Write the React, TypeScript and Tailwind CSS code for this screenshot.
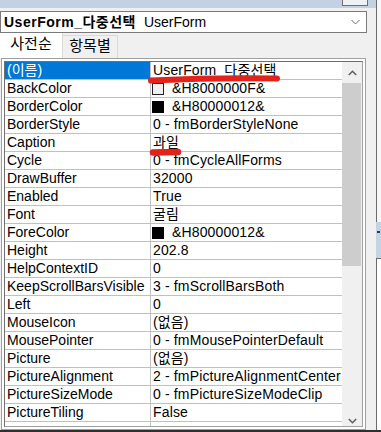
import React from 'react'

type Prop = { name: string; value: string; swatch?: 'light' | 'dark' }

const props: Prop[] = [
  { name: '(이름)', value: 'UserForm_다중선택' },
  { name: 'BackColor', value: '&H8000000F&', swatch: 'light' },
  { name: 'BorderColor', value: '&H80000012&', swatch: 'dark' },
  { name: 'BorderStyle', value: '0 - fmBorderStyleNone' },
  { name: 'Caption', value: '과일' },
  { name: 'Cycle', value: '0 - fmCycleAllForms' },
  { name: 'DrawBuffer', value: '32000' },
  { name: 'Enabled', value: 'True' },
  { name: 'Font', value: '굴림' },
  { name: 'ForeColor', value: '&H80000012&', swatch: 'dark' },
  { name: 'Height', value: '202.8' },
  { name: 'HelpContextID', value: '0' },
  { name: 'KeepScrollBarsVisible', value: '3 - fmScrollBarsBoth' },
  { name: 'Left', value: '0' },
  { name: 'MouseIcon', value: '(없음)' },
  { name: 'MousePointer', value: '0 - fmMousePointerDefault' },
  { name: 'Picture', value: '(없음)' },
  { name: 'PictureAlignment', value: '2 - fmPictureAlignmentCenter' },
  { name: 'PictureSizeMode', value: '0 - fmPictureSizeModeClip' },
  { name: 'PictureTiling', value: 'False' },
  { name: '', value: '' },
]

function Chevron({ up }: { up?: boolean }) {
  return (
    <svg width="9" height="6" viewBox="0 0 9 6">
      <polyline
        points={up ? '0.8,5 4.5,1.3 8.2,5' : '0.8,1 4.5,4.7 8.2,1'}
        fill="none"
        stroke="#606060"
        strokeWidth="1.6"
      />
    </svg>
  )
}

function Row({ p, selected }: { p: Prop; selected: boolean }) {
  return (
    <div className="flex h-[18px] shrink-0 border-b border-[#c0c0c0]">
      <div
        className={
          selected
            ? 'w-[146px] shrink-0 overflow-hidden whitespace-nowrap border-r border-[#c0c0c0] bg-[#0078d7] pl-[2px] leading-[17px] text-white'
            : 'w-[146px] shrink-0 overflow-hidden whitespace-nowrap border-r border-[#c0c0c0] pl-[2px] leading-[17px] text-black'
        }
      >
        {p.name}
      </div>
      <div className="flex flex-1 items-center overflow-hidden whitespace-nowrap pl-[2px] leading-[17px] text-black tracking-[0.15px]">
        {p.swatch === 'light' && (
          <span className="-ml-[1px] mr-[8px] h-[12px] w-[12px] shrink-0 border border-[#222] bg-[#f0f0f0]" />
        )}
        {p.swatch === 'dark' && (
          <span className="-ml-[1px] mr-[8px] h-[12px] w-[12px] shrink-0 bg-black" />
        )}
        {p.value}
      </div>
    </div>
  )
}

export default function App() {
  return (
    <div className="relative flex h-[432px] w-[381px] flex-col overflow-hidden bg-[#f4f4f4] font-['Liberation_Sans','Noto_Sans_CJK_KR',sans-serif] text-[14px]">
      <div className="flex min-h-0 flex-1">
        {/* properties window */}
        <div className="flex w-[376px] flex-col bg-[#f0f0f0]">
          {/* title bar edge */}
          <div className="flex h-[8px] justify-end bg-[#c3d2e2] pr-[8px]">
            <div className="h-[6px] w-[26px] border-x border-b border-[#707070] bg-[#eef1f5]" />
          </div>

          {/* object combo */}
          <div className="mt-[3px] flex h-[22px] w-[367px] items-center border border-[#7a7a7a] bg-white pl-[3px] pr-[6px]">
            <span className="font-bold tracking-[0.5px]">UserForm_다중선택</span>
            <span className="ml-[8px]">UserForm</span>
            <span className="ml-auto flex">
              <svg width="9" height="6" viewBox="0 0 9 6">
                <polyline points="0.5,1 4.5,5 8.5,1" fill="none" stroke="#707070" strokeWidth="1" />
              </svg>
            </span>
          </div>

          {/* tabs */}
          <div className="flex h-[25px] items-end">
            <div className="flex h-[25px] w-[63px] items-center justify-center border-r border-[#d9d9d9] bg-white pb-[2px] text-[15px]">
              사전순
            </div>
            <div className="flex h-[23px] w-[55px] items-center justify-center border-r border-t border-[#d9d9d9] bg-[#f0f0f0] pb-[1px] text-[15px]">
              항목별
            </div>
          </div>

          {/* property grid */}
          <div className="ml-[1px] h-[372px] w-[365px] border border-[#a0a0a0] bg-white p-[2px]">
            <div className="flex h-full border border-[#6e6e6e] border-b-[#a0a0a0] border-r-[#a0a0a0] bg-white">
              <div className="flex min-w-0 flex-1 flex-col overflow-hidden">
                {props.map((p, i) => (
                  <Row key={i} p={p} selected={i === 0} />
                ))}
              </div>
              <div className="flex w-[20px] shrink-0 flex-col bg-[#f0f0f0]">
                <div className="flex h-[21px] items-center justify-center">
                  <Chevron up />
                </div>
                <div className="mr-[1px] h-[183px] bg-[#cdcdcd]" />
                <div className="flex-1" />
                <div className="flex h-[17px] items-end justify-center pb-[2px]">
                  <Chevron />
                </div>
              </div>
            </div>
          </div>
        </div>

        {/* window behind, right edge */}
        <div className="flex w-[5px] flex-col">
          <div className="h-[222px] border-l border-[#6b6b6b] bg-[#f6f6f6]" />
          <div className="h-[36px] bg-[#c5d4e3] pl-[1px] pt-[9px]">
            <div className="h-[2px] w-[3px] bg-[#1c3f7c]" />
          </div>
          <div className="flex-1 border-l border-t border-[#6b6b6b] bg-white" />
        </div>
      </div>
      <div className="h-[2px] bg-[#2f2f2f]" />

      {/* red marker annotations */}
      <svg className="pointer-events-none absolute left-0 top-0" width="381" height="432" viewBox="0 0 381 432">
        <path d="M151 80.5 Q 214 77.5 277 78.5" fill="none" stroke="#e3221c" strokeWidth="6" strokeLinecap="round" />
        <path d="M153 152.5 L 178 152" fill="none" stroke="#e3221c" strokeWidth="6.5" strokeLinecap="round" />
      </svg>
    </div>
  )
}
